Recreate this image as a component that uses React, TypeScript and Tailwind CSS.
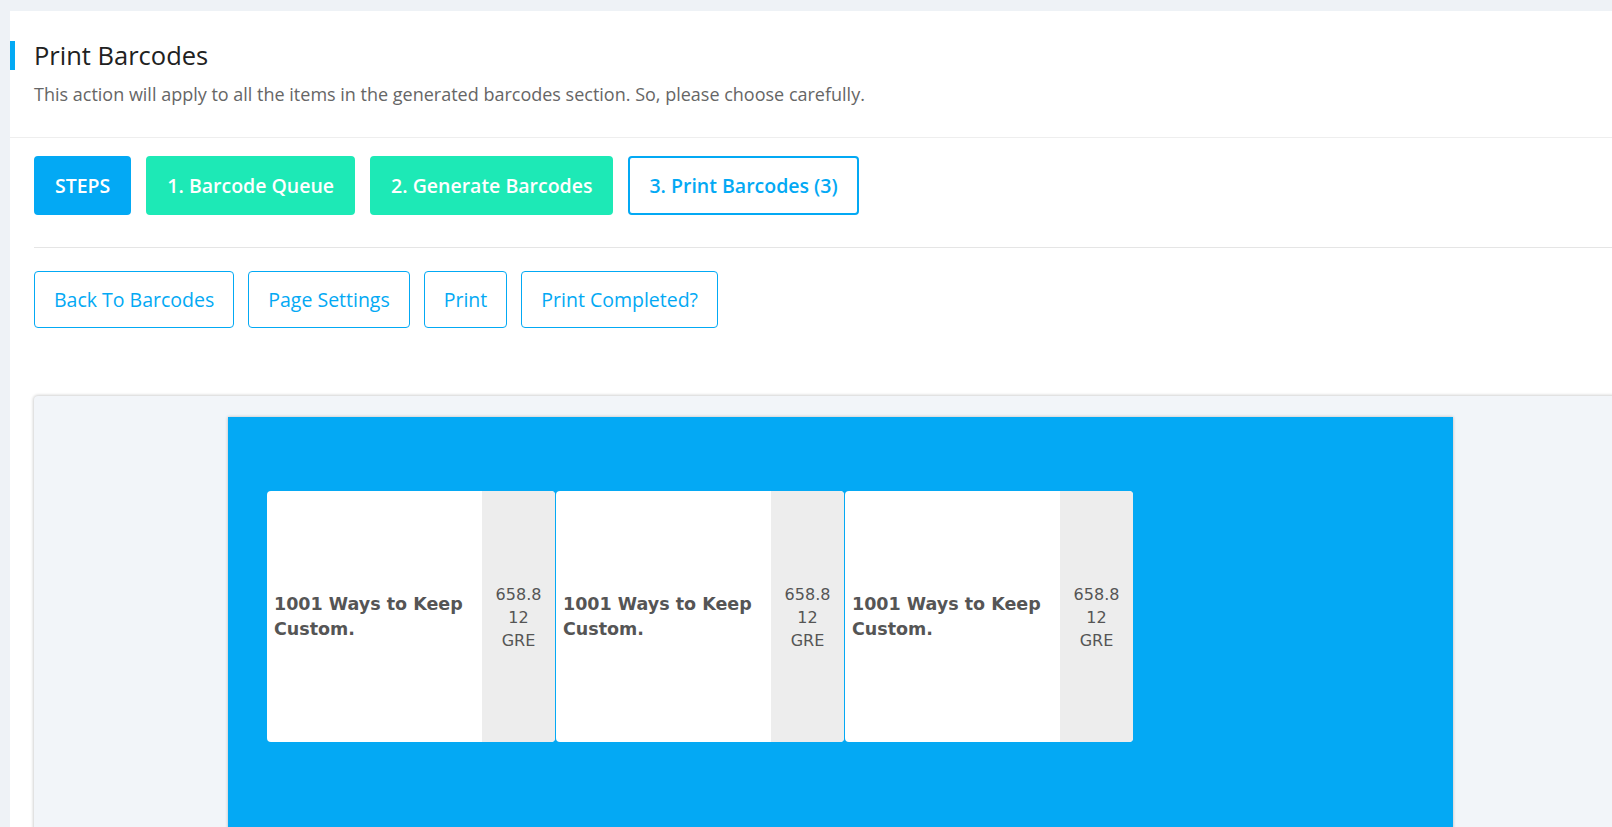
const labels = [1, 2, 3];

function StepButton({ text, variant }: { text: string; variant: "blue" | "green" | "outline" }) {
  const cls =
    variant === "blue"
      ? "bg-[#03a9f4] text-white border-2 border-[#03a9f4]"
      : variant === "green"
        ? "bg-[#1de9b6] text-white border-2 border-[#1de9b6]"
        : "bg-white text-[#03a9f4] border-2 border-[#03a9f4]";
  return (
    <button className={`h-[59px] rounded-[4px] px-[19px] text-[19.5px] font-semibold ${cls}`}>{text}</button>
  );
}

function ActionButton({ text }: { text: string }) {
  return (
    <button className="h-[57px] rounded-[4px] border border-[#03a9f4] bg-white px-[19px] text-[19.5px] text-[#03a9f4]">
      {text}
    </button>
  );
}

function Label() {
  return (
    <div className="flex h-[251px] w-[288px] overflow-hidden rounded-[4px] bg-white text-[#555] font-['DejaVu_Sans',sans-serif]">
      <div className="flex flex-1 items-center pl-[7px] pr-[4px] text-[17.5px] font-bold leading-[25px]">
        1001 Ways to Keep Custom.
      </div>
      <div className="flex w-[73px] flex-col items-center justify-center bg-[#ededed] pt-[2px] text-[16px] leading-[23px]">
        <span>658.8</span>
        <span>12</span>
        <span>GRE</span>
      </div>
    </div>
  );
}

export default function App() {
  return (
    <div className="h-[827px] w-[1612px] overflow-hidden bg-[#eef2f6] pl-[10px] pt-[11px] font-['Open_Sans',sans-serif]">
      <div className="w-[1650px] bg-white pb-[40px]">
        <div className="border-b border-[#eeeeee] pb-[31px] pt-[30px]">
          <h1 className="border-l-[5px] border-[#03a9f4] pl-[19px] text-[25.5px] leading-[29px] text-[#212121]">
            Print Barcodes
          </h1>
          <p className="mt-[12px] pl-[24px] text-[18px] leading-[24px] text-[#666]">
            This action will apply to all the items in the generated barcodes section. So, please choose carefully.
          </p>
        </div>
        <div className="pl-[24px]">
          <div className="flex gap-[15px] border-b border-[#e5e5e5] pb-[32px] pt-[18px]">
            <StepButton text="STEPS" variant="blue" />
            <StepButton text="1. Barcode Queue" variant="green" />
            <StepButton text="2. Generate Barcodes" variant="green" />
            <StepButton text="3. Print Barcodes (3)" variant="outline" />
          </div>
          <div className="flex gap-[14px] pt-[23px]">
            <ActionButton text="Back To Barcodes" />
            <ActionButton text="Page Settings" />
            <ActionButton text="Print" />
            <ActionButton text="Print Completed?" />
          </div>
          <div className="mt-[68px] h-[500px] rounded-tl-[4px] bg-[#f2f5f9] pl-[194px] pt-[21px] shadow-[0_0_3px_1px_rgba(0,0,0,0.18)]">
            <div className="h-[480px] w-[1225px] bg-[#04a9f4] pl-[39px] pt-[74px] shadow-[0_0_3px_rgba(0,0,0,0.25)]">
              <div className="flex gap-[1px]">
                {labels.map((n) => (
                  <Label key={n} />
                ))}
              </div>
            </div>
          </div>
        </div>
      </div>
    </div>
  );
}
